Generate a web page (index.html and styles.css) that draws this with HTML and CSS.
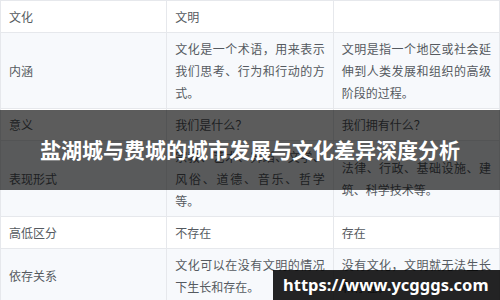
FILE: index.html
```html
<!DOCTYPE html>
<html lang="zh-CN">
<head>
<meta charset="utf-8">
<link rel="stylesheet" href="styles.css">
</head>
<body>
<div class="page">
  <table class="cmp">
    <colgroup><col class="c"><col class="c"><col class="c"></colgroup>
    <tr class="head"><td>文化</td><td>文明</td><td></td></tr>
    <tr class="alt"><td>内涵</td><td>文化是一个术语，用来表示我们思考、行为和行动的方式。</td><td>文明是指一个地区或社会延伸到人类发展和组织的高级阶段的过程。</td></tr>
    <tr><td>意义</td><td>我们是什么？</td><td>我们拥有什么？</td></tr>
    <tr class="alt"><td>表现形式</td><td>宗教、艺术、舞蹈、文学、风俗、道德、音乐、哲学等。</td><td>法律、行政、基础设施、建筑、科学技术等。</td></tr>
    <tr><td>高低区分</td><td>不存在</td><td>存在</td></tr>
    <tr class="alt"><td>依存关系</td><td>文化可以在没有文明的情况下生长和存在。</td><td>没有文化，文明就无法生长和存在。</td></tr>
  </table>
  <div class="banner"><h1 class="title">盐湖城与费城的城市发展与文化差异深度分析</h1></div>
  <div class="mark">https://www.ycgggs.com</div>
</div>
</body>
</html>
```
FILE: styles.css
```css
html, body {
  margin: 0;
  padding: 0;
  background: #ffffff;
}
.page {
  position: relative;
  width: 500px;
  height: 300px;
  overflow: hidden;
  font-family: "Noto Sans CJK SC", "Noto Sans", sans-serif;
}
.cmp {
  width: 500px;
  border-collapse: collapse;
  table-layout: fixed;
  font-size: 12px;
  line-height: 22px;
  color: #555a60;
}
.cmp .c { width: 33.333%; }
.cmp td {
  border: 1px solid #e6e8ec;
  padding: 4.5px 8px;
  vertical-align: middle;
  text-align: justify;
}
.cmp tr.alt td { background: #f7f9fc; }
.cmp tr.head td { background: #ffffff; }
.banner {
  position: absolute;
  left: 0;
  top: 110px;
  width: 500px;
  height: 80px;
  background: rgba(0, 0, 0, 0.64);
  display: flex;
  align-items: center;
  justify-content: center;
}
.title {
  margin: 0;
  font-size: 21px;
  font-weight: 700;
  color: #ffffff;
  line-height: 1.2;
  font-family: "Noto Sans CJK SC", sans-serif;
}
.mark {
  position: absolute;
  left: 273px;
  top: 270px;
  width: 227px;
  height: 30px;
  box-sizing: border-box;
  padding-left: 10px;
  background: rgba(0, 0, 0, 0.86);
  color: #ffffff;
  font-family: "Noto Sans", sans-serif;
  font-weight: 700;
  font-size: 16.5px;
  line-height: 30px;
  white-space: nowrap;
}
```
